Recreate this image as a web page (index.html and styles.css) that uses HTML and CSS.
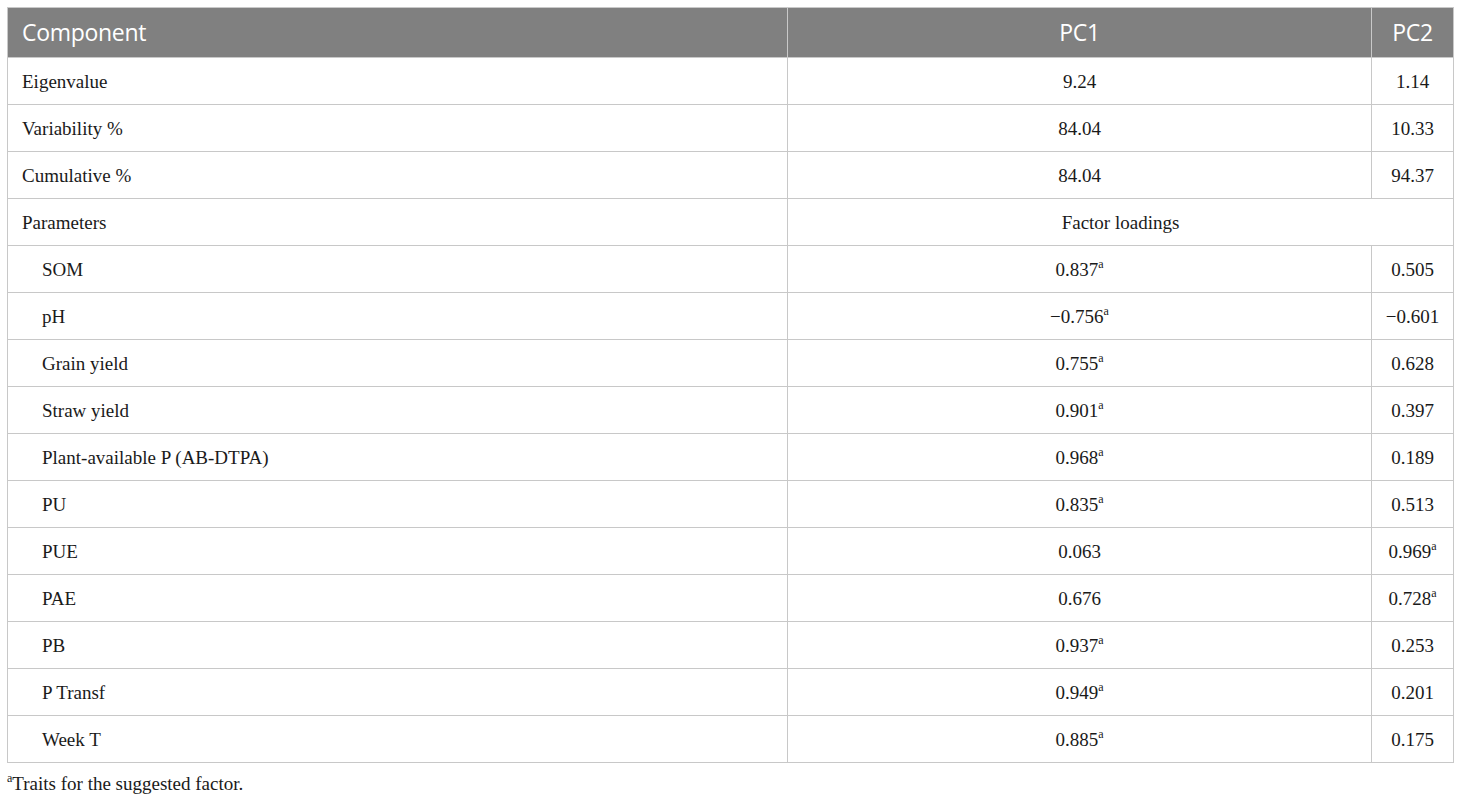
FILE: index.html
```html
<!DOCTYPE html>
<html>
<head>
<meta charset="utf-8">
<link rel="stylesheet" href="styles.css">
</head>
<body>
<div class="wrap">
<table class="tbl">
<colgroup><col class="c1"><col class="c2"><col class="c3"></colgroup>
<thead>
<tr><th class="left">Component</th><th>PC1</th><th>PC2</th></tr>
</thead>
<tbody>
<tr><td class="left">Eigenvalue</td><td>9.24</td><td>1.14</td></tr>
<tr><td class="left">Variability %</td><td>84.04</td><td>10.33</td></tr>
<tr><td class="left">Cumulative %</td><td>84.04</td><td>94.37</td></tr>
<tr><td class="left">Parameters</td><td colspan="2" class="span">Factor loadings</td></tr>
<tr><td class="left sub">SOM</td><td>0.837<sup>a</sup></td><td>0.505</td></tr>
<tr><td class="left sub">pH</td><td>&minus;0.756<sup>a</sup></td><td>&minus;0.601</td></tr>
<tr><td class="left sub">Grain yield</td><td>0.755<sup>a</sup></td><td>0.628</td></tr>
<tr><td class="left sub">Straw yield</td><td>0.901<sup>a</sup></td><td>0.397</td></tr>
<tr><td class="left sub">Plant-available P (AB-DTPA)</td><td>0.968<sup>a</sup></td><td>0.189</td></tr>
<tr><td class="left sub">PU</td><td>0.835<sup>a</sup></td><td>0.513</td></tr>
<tr><td class="left sub">PUE</td><td>0.063</td><td>0.969<sup>a</sup></td></tr>
<tr><td class="left sub">PAE</td><td>0.676</td><td>0.728<sup>a</sup></td></tr>
<tr><td class="left sub">PB</td><td>0.937<sup>a</sup></td><td>0.253</td></tr>
<tr><td class="left sub">P Transf</td><td>0.949<sup>a</sup></td><td>0.201</td></tr>
<tr><td class="left sub">Week T</td><td>0.885<sup>a</sup></td><td>0.175</td></tr>
</tbody>
</table>
<p class="note"><sup>a</sup>Traits for the suggested factor.</p>
</div>
</body>
</html>
```
FILE: styles.css
```css
html, body {
  margin: 0;
  padding: 0;
  background: #ffffff;
}
.wrap {
  padding: 7px 0 0 7px;
}
.tbl {
  border-collapse: collapse;
  table-layout: fixed;
  width: 1446px;
  font-family: "Liberation Serif", "Times New Roman", serif;
  font-size: 19px;
  color: #1a1a1a;
}
.c1 { width: 780px; }
.c2 { width: 584px; }
.c3 { width: 82px; }
.tbl th {
  background: #808080;
  color: #ffffff;
  font-family: "Open Sans", "Liberation Sans", sans-serif;
  font-weight: 400;
  font-size: 23px;
  letter-spacing: -0.3px;
  height: 48px;
  padding: 0 12px 1px;
  text-align: center;
  border: 1px solid #c9c9c9;
}
.tbl td {
  height: 45px;
  padding: 1px 12px 0;
  text-align: center;
  border: 1px solid #c8c8c8;
}
.tbl th.left, .tbl td.left {
  text-align: left;
  padding-left: 14px;
}
.tbl td.sub {
  padding-left: 34px;
}
.tbl sup {
  font-size: 12px;
  vertical-align: 8px;
  line-height: 0;
}
.note {
  margin: 10px 0 0 0;
  font-family: "Liberation Serif", "Times New Roman", serif;
  font-size: 19px;
  color: #1a1a1a;
}
.note sup {
  font-size: 12px;
  vertical-align: 8px;
  line-height: 0;
}
```
